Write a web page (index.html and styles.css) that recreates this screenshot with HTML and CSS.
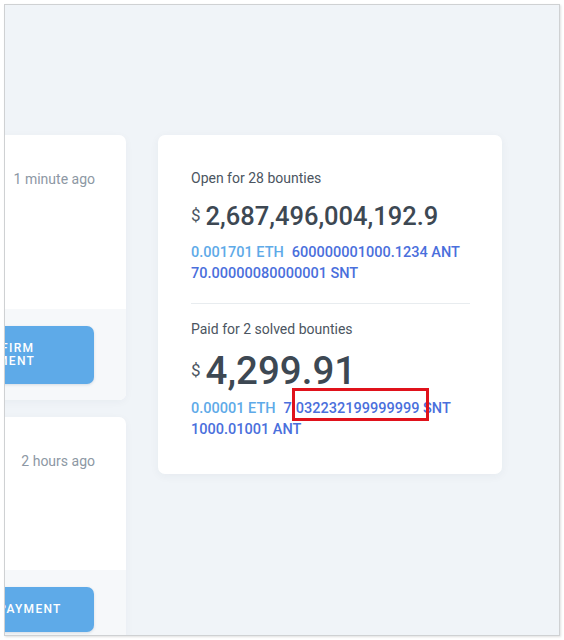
FILE: index.html
```html
<!DOCTYPE html>
<html>
<head>
<meta charset="utf-8">
<link rel="stylesheet" href="styles.css">
</head>
<body>
<div class="frame">
  <div class="layout">
    <div class="feed">
      <div class="bounty">
        <div class="bounty-body bounty-body--tall">
          <span class="time">1 minute ago</span>
        </div>
        <div class="bounty-foot">
          <button class="pay pay--narrow">Confirm Payment</button>
        </div>
      </div>
      <div class="bounty">
        <div class="bounty-body">
          <span class="time">2 hours ago</span>
        </div>
        <div class="bounty-foot">
          <button class="pay pay--wide">Confirm Payment</button>
        </div>
      </div>
    </div>
    <div class="stats">
      <div class="block">
        <div class="label">Open for 28 bounties</div>
        <div class="amount amount--open"><span class="cur">$</span><span class="num">2,687,496,004,192.9</span></div>
        <div class="coins">
          <span class="coin eth">0.001701 ETH</span><span class="coin tok">600000001000.1234 ANT</span>
          <span class="coin tok">70.00000080000001 SNT</span>
        </div>
      </div>
      <div class="block block--paid">
        <div class="label">Paid for 2 solved bounties</div>
        <div class="amount amount--paid"><span class="cur">$</span><span class="num">4,299.91</span></div>
        <div class="coins">
          <span class="coin eth">0.00001 ETH</span><span class="coin tok">7.032232199999999 SNT</span>
          <span class="coin tok">1000.01001 ANT</span>
        </div>
      </div>
    </div>
  </div>
</div>
<div class="highlight"></div>
</body>
</html>
```
FILE: styles.css
```css
html, body {
  margin: 0;
  padding: 0;
  background: #ffffff;
}
body {
  padding: 4px;
  font-family: Roboto, "Liberation Sans", sans-serif;
}
.frame {
  width: 556px;
  height: 632px;
  box-sizing: border-box;
  border: 1px solid #cfd1d3;
  box-shadow: 1px 1px 2px rgba(0, 0, 0, 0.12);
  background: #f0f4f8;
  overflow: hidden;
}
.layout {
  display: flex;
  align-items: flex-start;
  gap: 32px;
  padding-top: 130px;
  margin-left: -139px;
}
.feed {
  width: 260px;
  flex: none;
  display: flex;
  flex-direction: column;
  gap: 17px;
}
.bounty {
  background: #ffffff;
  border-radius: 7px;
  overflow: hidden;
  box-shadow: 0 2px 8px rgba(30, 50, 80, 0.04);
}
.bounty-body {
  height: 153px;
  box-sizing: border-box;
  padding: 35px 31px 0 0;
  display: flex;
  justify-content: flex-end;
  align-items: flex-start;
}
.bounty-body--tall {
  height: 174px;
}
.time {
  font-size: 14px;
  line-height: 18px;
  color: #8d98a4;
}
.bounty-foot {
  background: #f6f8fa;
  padding: 17px 32px 16px 0;
  display: flex;
  justify-content: flex-end;
}
.pay {
  border: none;
  border-radius: 7px;
  background: #5eaae8;
  color: #ffffff;
  font-family: Roboto, "Liberation Sans", sans-serif;
  font-size: 12px;
  font-weight: 500;
  letter-spacing: 1.3px;
  line-height: 13px;
  text-transform: uppercase;
  text-align: center;
  box-shadow: 0 1px 3px rgba(30, 60, 100, 0.15);
  display: flex;
  align-items: center;
  justify-content: center;
  flex: none;
}
.pay--narrow {
  width: 181px;
  height: 58px;
  padding: 0 40px;
}
.pay--wide {
  width: 194px;
  height: 45px;
  padding: 0 20px;
}
.stats {
  width: 344px;
  flex: none;
  background: #ffffff;
  border-radius: 7px;
  box-shadow: 0 2px 10px rgba(30, 50, 80, 0.05);
  padding: 34px 32px 34px 33px;
  box-sizing: border-box;
}
.block--paid {
  margin-top: 19px;
  border-top: 1px solid #e8ecef;
  padding-top: 16px;
}
.label {
  font-size: 14px;
  line-height: 18px;
  color: #4b5561;
}
.amount {
  display: flex;
  align-items: flex-start;
  gap: 5px;
  color: #3d4853;
}
.num {
  font-weight: 500;
}
.amount--open {
  margin-top: 14px;
}
.amount--open .num {
  font-size: 25.5px;
  line-height: 30px;
}
.amount--open .cur {
  font-size: 17px;
  line-height: 17px;
  margin-top: 6px;
}
.amount--paid {
  margin-top: 11px;
}
.amount--paid .num {
  font-size: 38.5px;
  line-height: 44px;
}
.amount--paid .cur {
  font-size: 17px;
  line-height: 17px;
  margin-top: 13px;
}
.cur {
  color: #4b5561;
}
.coins {
  margin-top: 11px;
  font-size: 14.5px;
  line-height: 21px;
  font-weight: 500;
}
.block--paid .coins {
  margin-top: 5px;
}
.coin {
  display: inline-block;
  margin-right: 8px;
}
.eth {
  color: #5eaae8;
}
.tok {
  color: #4a6fdc;
}
.highlight {
  position: absolute;
  left: 292px;
  top: 388px;
  width: 137px;
  height: 33px;
  box-sizing: border-box;
  border: 3px solid #e0121b;
}
```
